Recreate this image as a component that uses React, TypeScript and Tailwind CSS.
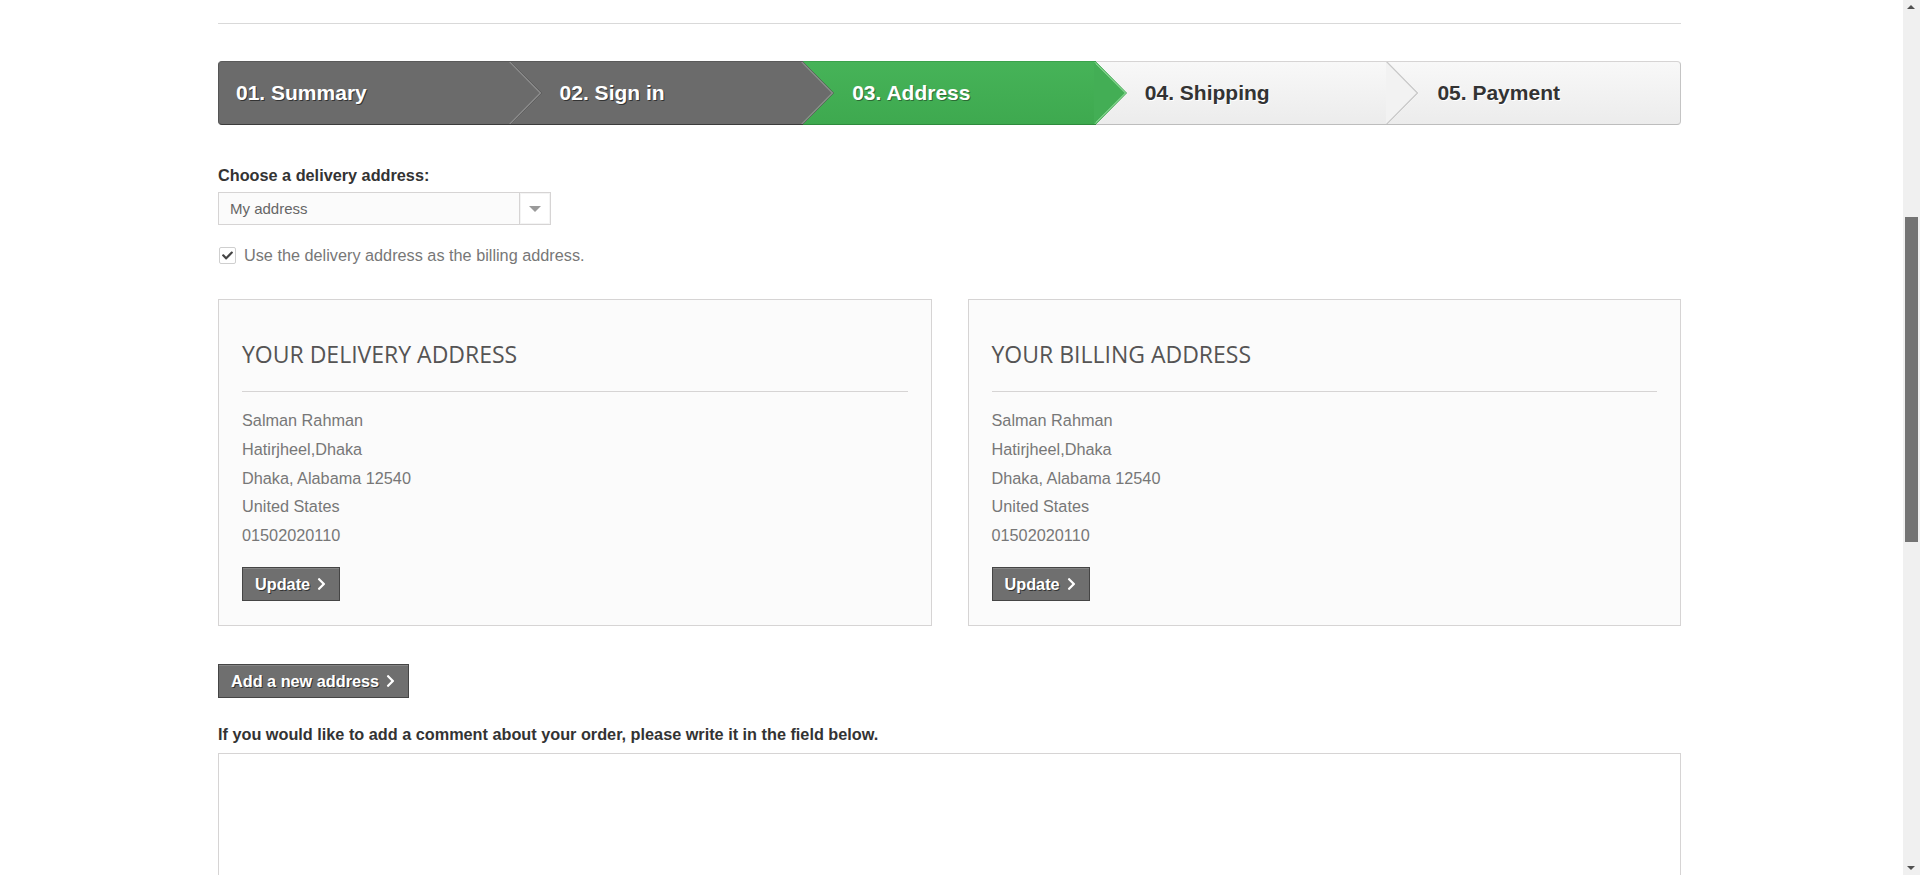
import { FaCheck, FaChevronRight } from 'react-icons/fa';

type Tone = 'dark' | 'green' | 'light';

const steps: { label: string; tone: Tone }[] = [
  { label: '01. Summary', tone: 'dark' },
  { label: '02. Sign in', tone: 'dark' },
  { label: '03. Address', tone: 'green' },
  { label: '04. Shipping', tone: 'light' },
  { label: '05. Payment', tone: 'light' },
];

const toneBox: Record<Tone, string> = {
  dark: 'bg-[#6b6b6b] border-t border-t-[#5a5a5a] border-b border-b-[#3c3c3c] text-white [text-shadow:1px_1px_0_#333]',
  green:
    'bg-linear-to-b from-[#46b358] to-[#3ea94f] border-t border-t-[#3aa24b] border-b border-b-[#2f8a3d] text-white [text-shadow:1px_1px_0_#2b6b34]',
  light:
    'bg-linear-to-b from-[#f8f8f8] to-[#ececec] border-t border-t-[#d6d4d4] border-b border-b-[#bdbdbd] text-[#333] [text-shadow:1px_1px_0_#fff]',
};

// chevron drawn over the start of the next step
const arrowFill: Record<Tone, { fill: string; edge: string; shade: string }> = {
  dark: { fill: '#6b6b6b', edge: '#8c8c8c', shade: '#4a4a4a' },
  green: { fill: '#43ae55', edge: '#6fcb7c', shade: '#3a9b49' },
  light: { fill: '#f2f2f2', edge: '#c9c9c9', shade: '#ffffff' },
};

function Arrow({ tone }: { tone: Tone }) {
  const c = arrowFill[tone];
  return (
    <svg
      className="absolute top-0 right-[-31px] z-10 h-full w-[33px]"
      viewBox="0 0 33 64"
      preserveAspectRatio="none"
    >
      <polygon points="0,0 31,32 0,64" fill={c.fill} />
      <polyline points="1,-1 32.5,32 1,65" fill="none" stroke={c.shade} strokeWidth="1" />
      <polyline points="0,-1 31.5,32 0,65" fill="none" stroke={c.edge} strokeWidth="1.4" />
    </svg>
  );
}

function Stepper() {
  return (
    <div className="mt-[37px] grid h-[64px] grid-cols-5 rounded-[4px] font-['Liberation_Sans',Arial,sans-serif] text-[21px] font-bold">
      {steps.map((s, i) => (
        <div
          key={s.label}
          className={`relative flex items-center ${toneBox[s.tone]} ${
            i === 0 ? 'rounded-l-[4px] border-l border-l-[#555] pl-[17px]' : 'pl-[49px]'
          } ${i === steps.length - 1 ? 'rounded-r-[4px] border-r border-r-[#c4c4c4]' : ''}`}
        >
          <span className="relative z-20">{s.label}</span>
          {i < steps.length - 1 && <Arrow tone={s.tone} />}
        </div>
      ))}
    </div>
  );
}

function DarkButton({ children }: { children: React.ReactNode }) {
  return (
    <button className="flex h-[34px] items-center gap-[6px] border border-[#454545] bg-[#6f6f6f] pr-[12px] pl-[12px] text-[16.25px] font-bold text-white shadow-[inset_0_1px_0_#858585] [text-shadow:1px_1px_0_#333]">
      {children}
      <FaChevronRight className="mt-[1px] h-[14px] w-[11px]" />
    </button>
  );
}

function AddressCard({ title }: { title: string }) {
  const lines = ['Salman Rahman', 'Hatirjheel,Dhaka', 'Dhaka, Alabama 12540', 'United States', '01502020110'];
  return (
    <div className="border border-[#d6d4d4] bg-[#fbfbfb] px-[23px] pt-[41px] pb-[24px]">
      <h3 className="border-b border-[#d6d4d4] pb-[23px] font-['Open_Sans',sans-serif] text-[23px] leading-[27px] font-medium text-[#555454] uppercase">
        {title}
      </h3>
      <ul className="pt-[14px] text-[16.25px] leading-[28.75px] text-[#777]">
        {lines.map((l) => (
          <li key={l}>{l}</li>
        ))}
      </ul>
      <div className="mt-[17px] flex">
        <DarkButton>Update</DarkButton>
      </div>
    </div>
  );
}

function Scrollbar() {
  return (
    <div className="relative w-[17px] shrink-0 bg-[#f0f0f0]">
      <div className="absolute top-[5px] left-[4px] h-0 w-0 border-x-[4.5px] border-b-[4px] border-x-transparent border-b-[#505050]" />
      <div className="absolute top-[217px] left-[2px] h-[325px] w-[13px] bg-[#747474]" />
      <div className="absolute bottom-[5px] left-[4px] h-0 w-0 border-x-[4.5px] border-t-[4px] border-x-transparent border-t-[#505050]" />
    </div>
  );
}

export default function App() {
  return (
    <div className="flex h-[875px] w-full overflow-hidden bg-white font-['Liberation_Sans',Arial,sans-serif]">
      <div className="min-w-0 flex-1">
        <div className="ml-[218px] w-[1463px] pt-[23px]">
          <div className="h-px bg-[#d9d9d9]" />
          <Stepper />

          <label className="mt-[40px] block text-[16.25px] leading-[20px] font-bold text-[#333]">
            Choose a delivery address:
          </label>
          <div className="mt-[7px] flex h-[33px] w-[333px] items-center border border-[#d6d4d4] bg-[#fbfbfb]">
            <span className="flex-1 pt-[1px] pl-[11px] text-[15px] text-[#666]">My address</span>
            <span className="flex h-full w-[31px] items-center justify-center border-l border-[#d6d4d4] bg-white shadow-[inset_0_0_0_1px_#f4f4f4]">
              <span className="h-0 w-0 border-x-[6px] border-t-[6px] border-x-transparent border-t-[#9a9a9a]" />
            </span>
          </div>

          <div className="mt-[20px] flex h-[20px] items-center gap-[8px]">
            <span className="ml-[1px] flex h-[17px] w-[17px] items-center justify-center rounded-[2px] border border-[#cfcfcf] bg-white">
              <FaCheck className="h-[11px] w-[11px] text-[#444]" />
            </span>
            <span className="text-[16.25px] text-[#777]">Use the delivery address as the billing address.</span>
          </div>

          <div className="mt-[34px] grid grid-cols-2 gap-[36px]">
            <AddressCard title="Your delivery address" />
            <AddressCard title="Your billing address" />
          </div>

          <div className="mt-[38px] flex">
            <DarkButton>Add a new address</DarkButton>
          </div>

          <p className="mt-[26px] text-[16.25px] leading-[20px] font-bold text-[#333]">
            If you would like to add a comment about your order, please write it in the field below.
          </p>
          <textarea className="mt-[9px] block h-[160px] w-full resize-none border border-[#d6d4d4] bg-white" />
        </div>
      </div>
      <Scrollbar />
    </div>
  );
}
